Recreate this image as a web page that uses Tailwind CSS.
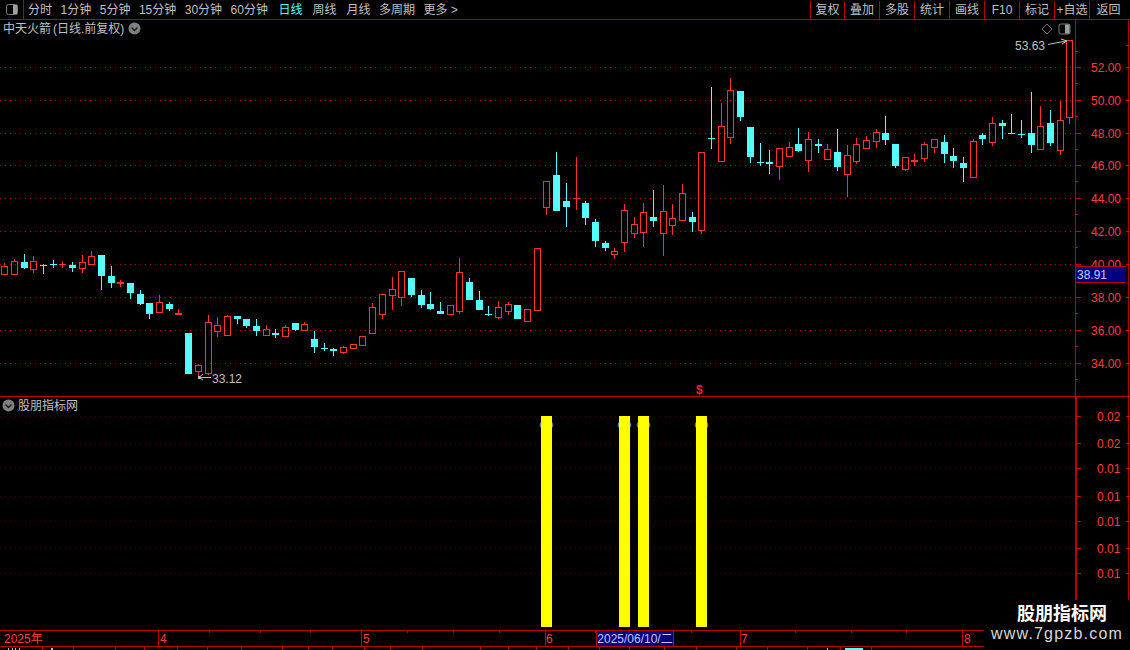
<!doctype html>
<html lang="zh">
<head>
<meta charset="utf-8">
<title>中天火箭</title>
<script src="https://cdn.jsdelivr.net/npm/@tailwindcss/browser@4"></script>
</head>
<body class="bg-black">
<div class="relative w-[1130px] h-[650px] overflow-hidden bg-black flex flex-col text-[12px] leading-none text-[#c0c0c0] font-['Liberation_Sans','Noto_Sans_CJK_SC',sans-serif]">

  <!-- top toolbar -->
  <header class="h-[20px] shrink-0 border-b border-[#b80000] flex items-stretch">
    <div class="w-[24px] shrink-0 border-r border-[#b80000] flex items-center justify-center">
      <svg width="14" height="13" viewBox="0 0 14 13"><rect x="1.5" y="1.5" width="11" height="10" rx="2" fill="none" stroke="#808080"/><rect x="8" y="2" width="4" height="9" fill="#a0a0a0"/></svg>
    </div>
    <nav class="flex items-center pl-[4px] pt-[1px] gap-[8.5px]">
      <span>分时</span><span>1分钟</span><span>5分钟</span><span>15分钟</span><span>30分钟</span><span>60分钟</span>
      <span class="text-[#54ffff] ml-[2px]">日线</span><span class="ml-[1.5px]">周线</span><span class="ml-[1.5px]">月线</span><span>多周期</span><span>更多 &gt;</span>
    </nav>
    <div class="ml-auto flex items-stretch pt-[1px]">
      <span class="w-[34px] border-l border-[#b80000] flex items-center justify-center">复权</span>
      <span class="w-[35px] border-l border-[#b80000] flex items-center justify-center">叠加</span>
      <span class="w-[35px] border-l border-[#b80000] flex items-center justify-center">多股</span>
      <span class="w-[35px] border-l border-[#b80000] flex items-center justify-center">统计</span>
      <span class="w-[35px] border-l border-[#b80000] flex items-center justify-center">画线</span>
      <span class="w-[35px] border-l border-[#b80000] flex items-center justify-center">F10</span>
      <span class="w-[35px] border-l border-[#b80000] flex items-center justify-center">标记</span>
      <span class="w-[35px] border-l border-[#b80000] flex items-center justify-center">+自选</span>
      <span class="w-[41px] border-l border-[#b80000] flex items-center justify-center pr-[3px]">返回</span>
    </div>
  </header>

  <!-- price panel -->
  <section class="relative h-[376px] shrink-0">
    <svg id="price" class="absolute inset-0" width="1130" height="376" viewBox="0 20 1130 376" shape-rendering="crispEdges">
      <g id="priceGrid"></g>
      <g id="candles"></g>
      <g font-size="12" fill="#c0c0c0">
        <text x="1015" y="50">53.63</text>
        <text x="212" y="383">33.12</text>
      </g>
      <g fill="none" stroke="#c0c0c0" shape-rendering="auto">
        <path d="M1048 44.5 L1066 41 M1061 39 L1067 41 L1062 44"/>
        <path d="M211 377.5 H199 M203 374 L199 377.5 L203 380"/>
      </g>
      <rect x="198" y="376" width="2" height="3" fill="#c0c0c0"/>
    </svg>

    <div class="absolute left-[3px] top-[2px] flex items-center gap-[4px]">
      <span>中天火箭<span class="ml-[2px]">(日线.前复权)</span></span>
      <svg width="13" height="13" viewBox="0 0 13 13"><circle cx="6.5" cy="6.5" r="6" fill="#808080"/><path d="M3.5 5.5 L6.5 8.5 L9.5 5.5" fill="none" stroke="#1a1a1a" stroke-width="1.4"/></svg>
    </div>

    <div class="absolute left-[1041px] top-[3px] flex items-center gap-[5px]">
      <svg width="12" height="12" viewBox="0 0 12 12"><path d="M6 1 L11 6 L6 11 L1 6 Z" fill="none" stroke="#707070"/></svg>
      <svg width="13" height="12" viewBox="0 0 13 12"><rect x="1" y="1" width="11" height="10" rx="2" fill="none" stroke="#808080"/><rect x="7" y="1.5" width="4.5" height="9" fill="#a0a0a0"/></svg>
    </div>

    <div class="absolute left-[1076px] top-[246px] w-[50px] h-[17px] bg-[#000080] border-y border-[#c00000] text-[#c8c8ff] flex items-center pl-[1px]">38.91</div>
  </section>

  <!-- indicator panel -->
  <section class="relative h-[234px] shrink-0 border-t border-[#c00000]">
    <svg id="indicator" class="absolute left-0 top-[-1px]" width="1130" height="234" viewBox="0 396 1130 234" shape-rendering="crispEdges">
      <g id="indGrid"></g>
      <defs>
        <radialGradient id="glow">
          <stop offset="0" stop-color="#c8c8d8"/>
          <stop offset="0.65" stop-color="#a0aad0"/>
          <stop offset="1" stop-color="#3050b0"/>
        </radialGradient>
      </defs>
      <g fill="url(#glow)" shape-rendering="auto">
        <ellipse cx="546.5" cy="425" rx="7" ry="5"/>
        <ellipse cx="624.5" cy="425" rx="7" ry="5"/>
        <ellipse cx="643.5" cy="425" rx="7" ry="5"/>
        <ellipse cx="701.5" cy="425" rx="7" ry="5"/>
      </g>
      <g fill="#ffff00">
        <rect x="541" y="416" width="11" height="211"/>
        <rect x="619" y="416" width="11" height="211"/>
        <rect x="638" y="416" width="11" height="211"/>
        <rect x="696" y="416" width="11" height="211"/>
      </g>
    </svg>
    <div class="absolute left-[2px] top-[2px] flex items-center gap-[3px]">
      <svg width="13" height="13" viewBox="0 0 13 13"><circle cx="6.5" cy="6.5" r="6" fill="#808080"/><path d="M3.5 5.5 L6.5 8.5 L9.5 5.5" fill="none" stroke="#1a1a1a" stroke-width="1.4"/></svg>
      <span>股朋指标网</span>
    </div>
  </section>

  <!-- date axis -->
  <section class="relative h-[16px] shrink-0 border-t border-[#c00000] text-[#ff3c3c]">
    <svg id="dateTicks" class="absolute left-0 top-[-1px]" width="1130" height="17" viewBox="0 630 1130 17" shape-rendering="crispEdges"></svg>
    <span class="absolute left-[4px] top-[2px]">2025年</span>
    <span class="absolute left-[160px] top-[2px]">4</span>
    <span class="absolute left-[363px] top-[2px]">5</span>
    <span class="absolute left-[546px] top-[2px]">6</span>
    <span class="absolute left-[741px] top-[2px]">7</span>
    <span class="absolute left-[964px] top-[2px]">8</span>
    <span class="absolute left-[596px] top-0 w-[78px] h-[15px] bg-[#000080] text-[#c8c8ff] flex items-center justify-center border-x border-[#c00000] whitespace-nowrap">2025/06/10/二</span>
  </section>

  <!-- clipped status row -->
  <footer class="h-[4px] shrink-0 border-t border-[#c00000]">
    <svg id="statusTicks" width="1130" height="3" viewBox="0 647 1130 3" shape-rendering="crispEdges" class="block"></svg>
  </footer>

  <!-- watermark -->
  <div class="absolute right-0 bottom-0 w-[146px] h-[50px] bg-black flex flex-col items-start pt-[4px]">
    <span class="text-[18px] leading-[20px] font-bold text-white ml-[33px]">股朋指标网</span>
    <span class="text-[16px] leading-[18px] tracking-[1.2px] text-[#d8d8d8] mt-[1px] ml-[7px] whitespace-nowrap">www.7gpzb.com</span>
  </div>
</div>

<script>
var NS = 'http://www.w3.org/2000/svg';
function add(parent, tag, attrs, text) {
  var el = document.createElementNS(NS, tag);
  for (var k in attrs) el.setAttribute(k, attrs[k]);
  if (text) el.textContent = text;
  parent.appendChild(el);
  return el;
}
var RED = '#ff3232', CYAN = '#54ffff', AXIS = '#c00000', DOT = '#a00000';

/* col, colour, bodyTop, bodyBottom, wickTop, wickBottom */
var data = [
[4,'r',266,274,263,274],[14,'r',261,274,259,275],[24,'c',262,268,254,269],[33,'r',261,269,256,273],
[43,'c',265,266,264,274],[53,'c',264,265,260,268],[62,'r',264,265,261,268],[72,'c',265,268,262,272],
[82,'r',262,268,255,273],[91,'r',256,264,251,265],[101,'c',255,276,255,290],[111,'c',276,283,266,288],
[120,'r',282,284,280,287],[130,'c',283,293,283,299],[140,'c',294,304,290,305],[149,'c',303,314,303,319],
[159,'r',302,312,295,313],[169,'c',304,309,302,311],[178,'r',313,315,309,315],[188,'c',333,374,333,374],
[198,'r',365,371,364,376],[208,'r',322,373,315,375],[217,'r',325,331,317,337],[227,'r',316,335,315,336],
[237,'c',316,319,316,324],[246,'c',319,326,319,328],[256,'c',326,331,319,336],[266,'r',329,335,325,336],
[275,'c',333,335,329,338],[285,'r',327,336,325,336],[295,'c',323,330,323,331],[304,'r',324,330,322,331],
[314,'c',339,347,331,353],[324,'c',348,349,343,351],[333,'c',349,351,348,356],[343,'r',347,352,346,354],
[353,'r',344,348,344,348],[362,'r',336,345,336,345],[372,'r',307,333,303,333],[382,'r',294,314,294,319],
[392,'r',289,295,277,310],[401,'r',271,297,271,306],[411,'c',278,295,278,297],[421,'c',295,305,290,308],
[430,'c',304,309,292,310],[440,'c',311,314,302,314],[450,'r',305,314,305,315],[459,'r',272,311,258,314],
[469,'c',282,300,278,300],[479,'c',300,310,291,310],[488,'c',314,315,306,316],[498,'r',307,317,301,319],
[508,'r',304,311,302,315],[517,'c',305,319,305,319],[527,'r',309,321,309,321],[537,'r',248,310,248,310],
[546,'r',181,207,181,215],[556,'c',175,211,152,211],[566,'c',201,207,183,227],[576,'r',198,199,157,210],
[585,'c',203,218,201,225],[595,'c',222,241,219,247],[605,'c',243,248,241,251],[614,'r',251,254,248,259],
[624,'r',210,242,204,252],[634,'r',224,233,217,238],[643,'r',212,232,203,247],[653,'c',217,221,190,227],
[663,'r',211,233,185,256],[672,'r',218,225,204,235],[682,'r',193,220,184,220],[692,'c',217,222,212,232],
[701,'r',152,230,152,234],[711,'c',138,139,87,149],[721,'r',126,161,103,161],[730,'r',90,137,78,144],
[740,'c',91,117,91,121],[750,'c',127,157,127,163],[760,'c',162,163,143,166],[769,'c',162,164,150,174],
[779,'r',148,166,148,180],[789,'r',147,156,142,157],[798,'c',144,151,128,152],[808,'r',139,160,132,172],
[818,'c',144,146,139,153],[827,'r',149,159,144,159],[837,'c',152,167,129,171],[847,'r',155,174,145,197],
[856,'r',144,161,138,164],[866,'r',140,148,136,149],[876,'r',132,141,129,148],[885,'c',133,140,116,145],
[895,'c',144,166,144,168],[905,'r',157,169,157,171],[914,'r',160,162,154,166],[924,'r',144,158,142,162],
[934,'r',139,147,139,153],[944,'c',142,154,135,163],[953,'c',156,161,148,168],[963,'c',163,168,157,182],
[973,'r',141,177,139,177],[982,'c',135,139,133,145],[992,'r',123,142,117,146],[1002,'c',123,126,120,139],
[1011,'c',133,134,114,134],[1021,'c',134,135,120,138],[1031,'c',133,145,92,153],[1040,'r',126,149,106,150],
[1050,'c',123,143,110,146],[1060,'r',120,150,101,155],[1069,'r',40,117,40,124]
];

var cg = document.getElementById('candles');
data.forEach(function (d) {
  var x = d[0], col = d[1] === 'r' ? RED : CYAN, t = d[2], b = d[3];
  if (d[4] < t) add(cg, 'rect', {x: x, y: d[4], width: 1, height: t - d[4], fill: col});
  if (d[5] > b) add(cg, 'rect', {x: x, y: b, width: 1, height: d[5] - b, fill: col});
  if (d[1] === 'c' || b - t <= 2) {
    add(cg, 'rect', {x: x - 3, y: t, width: 7, height: Math.max(1, b - t), fill: col});
  } else {
    add(cg, 'rect', {x: x - 2.5, y: t + 0.5, width: 6, height: b - t, fill: 'none', stroke: col});
  }
});

/* price axis */
var pg = document.getElementById('priceGrid');
var ys = [67,100,133,165,198,231,264,297,330,363];
var labels = ['52.00','50.00','48.00','46.00','44.00','42.00','40.00','38.00','36.00','34.00'];
ys.forEach(function (y, i) {
  add(pg, 'line', {x1: 0, x2: 1075, y1: y + 0.5, y2: y + 0.5, stroke: DOT, 'stroke-dasharray': '1 4'});
  add(pg, 'rect', {x: 1075, y: y, width: 6, height: 1, fill: AXIS});
  add(pg, 'rect', {x: 1075, y: y + 16, width: 3, height: 1, fill: AXIS});
  add(pg, 'text', {x: 1091, y: y + 5, 'font-size': 12, fill: '#ff3c3c', 'shape-rendering': 'auto'}, labels[i]);
});
add(pg, 'rect', {x: 1075, y: 20, width: 1, height: 376, fill: AXIS});
add(pg, 'rect', {x: 1075, y: 51, width: 3, height: 1, fill: AXIS});
add(pg, 'rect', {x: 1128, y: 20, width: 1, height: 376, fill: AXIS});
[45,67,100,133,165,198,231,264,297,330,363].forEach(function (y) {
  add(pg, 'rect', {x: 1126, y: y, width: 4, height: 1, fill: AXIS});
});
add(pg, 'text', {x: 696, y: 394, 'font-size': 12, 'font-weight': 'bold', fill: '#ff2020', 'shape-rendering': 'auto'}, '$');

/* indicator axis */
var ig = document.getElementById('indGrid');
var iy = [416,443,468,496,521,548,573];
var il = ['0.02','0.02','0.01','0.01','0.01','0.01','0.01'];
iy.forEach(function (y, i) {
  add(ig, 'line', {x1: 0, x2: 1075, y1: y + 0.5, y2: y + 0.5, stroke: '#500000', 'stroke-dasharray': '1 4'});
  add(ig, 'rect', {x: 1075, y: y, width: 6, height: 1, fill: AXIS});
  add(ig, 'text', {x: 1097, y: y + 5, 'font-size': 12, fill: '#ff3c3c', 'shape-rendering': 'auto'}, il[i]);
  add(ig, 'rect', {x: 1126, y: y, width: 4, height: 1, fill: AXIS});
});
add(ig, 'rect', {x: 1075, y: 396, width: 2, height: 234, fill: AXIS});
add(ig, 'rect', {x: 1128, y: 396, width: 1, height: 234, fill: AXIS});

/* date axis */
var dt = document.getElementById('dateTicks');
[158,361,545,740,962].forEach(function (x) {
  add(dt, 'rect', {x: x, y: 630, width: 1, height: 16, fill: AXIS});
});
[209,260,310,407,453,499,595,691,795,851,906].forEach(function (x) {
  add(dt, 'rect', {x: x, y: 630, width: 1, height: 3, fill: AXIS});
});

/* clipped bottom row */
var st = document.getElementById('statusTicks');
[42,73,115,144,177,207,241,282,308,332,364,390,422,480,508,536,568,599,629,664,696,736,767,807,840,871].forEach(function (x) {
  add(st, 'rect', {x: x, y: 647, width: 1, height: 3, fill: AXIS});
});
[[8,1],[12,1],[15,1],[19,1],[51,2]].forEach(function (p) {
  add(st, 'rect', {x: p[0], y: 648, width: p[1], height: 2, fill: '#c0c0c0'});
});
add(st, 'rect', {x: 827, y: 648, width: 1, height: 2, fill: '#c0c0c0'});
add(st, 'rect', {x: 845, y: 648, width: 18, height: 2, fill: '#54ffff'});
</script>
</body>
</html>
